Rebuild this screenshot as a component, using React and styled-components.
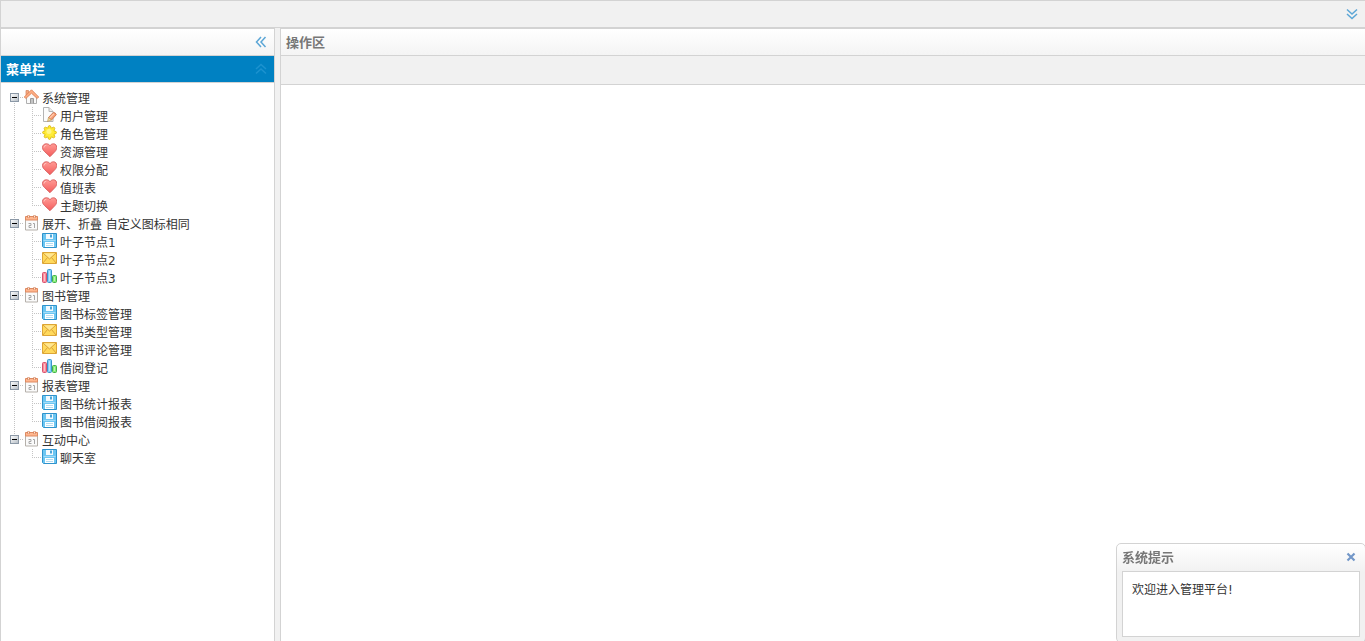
import React, { useState } from 'react';
import styled, { createGlobalStyle, css, ThemeProvider } from 'styled-components';

const theme = {
  border: '#d3d3d3',
  panel: '#f1f1f1',
  accent: '#0081c2',
  title: '#777777',
  text: '#333333',
  tool: '#5ba6d6',
  font: '"DejaVu Sans", "Noto Sans CJK SC", sans-serif',
};

const GlobalStyle = createGlobalStyle`
  * {
    box-sizing: border-box;
  }

  body {
    margin: 0;
    overflow: hidden;
    background: #ffffff;
  }
`;

const Page = styled.div`
  display: flex;
  flex-direction: column;
  height: 100vh;
  font-family: ${(props) => props.theme.font};
  font-size: 12px;
  color: ${(props) => props.theme.text};
  background: ${(props) => props.theme.panel};
`;

const TopBar = styled.header`
  display: flex;
  align-items: center;
  justify-content: flex-end;
  height: 28px;
  padding: 0 5px;
  border: 1px solid ${(props) => props.theme.border};
  border-right: 0;
`;

const Main = styled.div`
  display: flex;
  flex: 1;
  gap: 5px;
  min-height: 0;
`;

// Side panel that holds the menu tree
const Sidebar = styled.aside`
  display: flex;
  flex-direction: column;
  flex: 0 0 275px;
  background: #ffffff;
  border: 1px solid ${(props) => props.theme.border};
  border-bottom: 0;
`;

const Content = styled.main`
  display: flex;
  flex-direction: column;
  flex: 1;
  background: #ffffff;
  border: 1px solid ${(props) => props.theme.border};
  border-width: 1px 0 0 1px;
`;

const PanelHeader = styled.div`
  display: flex;
  align-items: center;
  justify-content: space-between;
  height: 27px;
  padding: 0 5px;
  border-bottom: 1px solid ${(props) => props.theme.border};
  background: linear-gradient(to bottom, #ffffff, #f4f4f4);
  color: ${(props) => props.theme.title};

  ${(props) =>
    props.$active &&
    css`
      background: ${props.theme.accent};
      color: #ffffff;
    `}
`;

const PanelTitle = styled.h2`
  margin: 0;
  padding-top: 2px;
  font-size: 13px;
  line-height: 16px;
  font-weight: bold;
`;

const ToolButton = styled.button`
  display: flex;
  width: 16px;
  height: 16px;
  padding: 0;
  border: 0;
  background: none;
  color: ${(props) => (props.$dim ? '#1c92cf' : props.theme.tool)};
  cursor: pointer;
`;

const TabStrip = styled.div`
  height: 29px;
  border-bottom: 1px solid ${(props) => props.theme.border};
  background: ${(props) => props.theme.panel};
`;

const Tree = styled.ul`
  flex: 1;
  margin: 0;
  padding: 6px 4px;
  overflow: hidden;
  list-style: none;
`;

const Branch = styled.ul`
  margin: 0;
  padding: 0;
  list-style: none;
`;

const Row = styled.div`
  display: flex;
  align-items: center;
  height: 18px;
`;

const dotsDown = 'repeating-linear-gradient(to bottom, #c4c4c4 0 1px, transparent 1px 2px)';
const dotsRight = 'repeating-linear-gradient(to right, #c4c4c4 0 1px, transparent 1px 2px)';

// Dotted guides of one tree level
const lines = {
  first: `${dotsDown} 9px 8px / 1px 10px no-repeat, ${dotsRight} 9px 8px / 9px 1px no-repeat`,
  middle: `${dotsDown} 9px 0 / 1px 18px no-repeat, ${dotsRight} 9px 8px / 9px 1px no-repeat`,
  last: `${dotsDown} 9px 0 / 1px 8px no-repeat, ${dotsRight} 9px 8px / 9px 1px no-repeat`,
  through: `${dotsDown} 9px 0 / 1px 18px no-repeat`,
  none: 'none',
};

const Guide = styled.span`
  flex: 0 0 18px;
  height: 18px;
  background: ${(props) => lines[props.$line]};
`;

const Toggle = styled.button`
  display: flex;
  align-items: flex-start;
  justify-content: center;
  flex: 0 0 18px;
  height: 18px;
  padding: 4px 0 0;
  border: 0;
  background: ${(props) => lines[props.$line]};
  cursor: pointer;
`;

const NodeLink = styled.a`
  display: flex;
  align-items: flex-start;
  gap: 3px;
  height: 18px;
  color: ${(props) => props.theme.text};
  line-height: 20px;
  white-space: nowrap;
  text-decoration: none;

  svg {
    flex: none;
  }

  &:hover {
    text-decoration: underline;
  }
`;

// Message window in the lower right corner
const Message = styled.section`
  position: fixed;
  right: -1px;
  bottom: -2px;
  display: flex;
  flex-direction: column;
  width: 250px;
  height: 100px;
  padding: 5px;
  border: 1px solid ${(props) => props.theme.border};
  border-radius: 5px;
  background: linear-gradient(to bottom, #ffffff, ${(props) => props.theme.panel} 28px);
`;

const MessageHeader = styled.div`
  display: flex;
  align-items: center;
  justify-content: space-between;
  height: 16px;
  margin-bottom: 6px;
  color: ${(props) => props.theme.title};
`;

const MessageBody = styled.p`
  flex: 1;
  margin: 0;
  padding: 10px 9px;
  border: 1px solid ${(props) => props.theme.border};
  background: #ffffff;
  line-height: 16px;
`;

const Chevrons = ({ turn = 0 }) => (
  <svg width="16" height="16" viewBox="0 0 16 16" fill="none" stroke="currentColor" strokeWidth="1.5">
    <g transform={`rotate(${turn} 8 8)`}>
      <path d="M3 3.5 8 8l5-4.5M3 8l5 4.5L13 8" />
    </g>
  </svg>
);

const Minus = ({ open }) => (
  <svg width="9" height="9" viewBox="0 0 9 9" shapeRendering="crispEdges">
    <defs>
      <linearGradient id="toggleFill" x1="0" y1="0" x2="1" y2="1">
        <stop offset="0" stopColor="#ffffff" />
        <stop offset="1" stopColor="#b4bcc4" />
      </linearGradient>
    </defs>
    <rect x=".5" y=".5" width="8" height="8" fill="url(#toggleFill)" stroke="#8b98a6" />
    <path d={open ? 'M2 4.5h5' : 'M2 4.5h5M4.5 2v5'} stroke="#000000" />
  </svg>
);

const Home = () => (
  <>
    <path d="M3.500 8v6.500h10V8l-5-4.500z" fill="#fafafa" stroke="#b0b0b0" />
    <path d="M7.500 14.500V9.500h3v5" fill="#c4c4c4" stroke="#999999" />
    <path d="M3 1.500h2.500v3L3 6.500z" fill="#f5a77e" stroke="#d98a66" strokeWidth=".8" />
    <path d="m1.300 8 7.200-7.200L15.700 8l-1.500 1.500-5.700-5.300-5.700 5.300z" fill="#ffae84" stroke="#dc8258" strokeWidth=".9" strokeLinejoin="round" />
  </>
);

const Edit = () => (
  <>
    <path d="M2.500.5h5.500l4 4v10H2.500z" fill="#fcfcfc" stroke="#b4b4b4" />
    <path d="M8 .500v4h4" fill="#eeeeee" stroke="#b4b4b4" />
    <path d="m7.500 10.500 4.500-4.800q2.500-.7 3.300 2L10.500 13z" fill="#f79b72" stroke="#c8714c" strokeWidth=".8" />
    <path d="m8.800 11 4.200-4.300" stroke="#ffc9ac" strokeWidth="1.300" />
    <path d="m7.500 10.500 3 2.500-4 1.500z" fill="#f5dc9c" stroke="#b58d4c" strokeWidth=".6" />
  </>
);

// Eight round petals on a disc
const Star = () => (
  <>
    <g fill="#ffe92c" stroke="#dcbb1c" strokeWidth=".9">
      {[0, 45, 90, 135, 180, 225, 270, 315].map((turn) => (
        <path key={turn} transform={`rotate(${turn} 8.500 7.500)`} d="M6.300 4.300 7.600.9q.9-.8 1.800 0l1.300 3.400z" />
      ))}
    </g>
    <circle cx="8.500" cy="7.500" r="4.600" fill="#ffec3a" />
    <circle cx="8" cy="6.500" r="2.500" fill="#fff584" />
  </>
);

const Heart = () => (
  <>
    <defs>
      <linearGradient id="heartFill" x1="0" y1="0" x2="0" y2="1">
        <stop offset="0" stopColor="#ff9a94" />
        <stop offset="1" stopColor="#f45c5c" />
      </linearGradient>
    </defs>
    <path
      d="M9 13.700 3.300 8.300C1.900 7 1.500 5.700 1.500 4.500 1.500 2.200 3.200.8 5.300.8 7 .8 8.300 1.500 9 2.700 9.700 1.500 11 .8 12.500.8c2 0 3.200 1.500 3.200 3.700 0 1.200-.4 2.600-1.500 3.800z"
      fill="url(#heartFill)"
      stroke="#d65a5a"
      strokeWidth=".9"
    />
    <path d="M3 4.500Q3 2.500 5.300 2.200" fill="none" stroke="#ffc4be" />
  </>
);

const Calendar = () => (
  <>
    <path d="M2.500 4.500h12v10.500h-12z" fill="#fafafa" stroke="#b5b0aa" />
    <path d="M2.500 1.500h12v3.500h-12z" fill="#ffb68e" stroke="#dd8a62" />
    <path d="M5.500 0v3M11.500 0v3" stroke="#cf7c55" strokeWidth="2" />
    <path d="M5.500 .5v2M11.500 .5v2" stroke="#ffe6d6" />
    <path d="M5.500 8.500h2.500v2h-2v2h2.500M10 8.500h1.500V13" fill="none" stroke="#a6a6a6" />
  </>
);

const Disk = () => (
  <>
    <path d="M1.500.5h14v14h-13l-1-1z" fill="#6cc6f2" stroke="#2f93cc" />
    <path d="M5 1h7v5H5z" fill="#f4fafe" />
    <path d="M9 1.500h2v3H9z" fill="#4aa6da" />
    <path d="M2.500 7.500h12" stroke="#a4dcf8" />
    <path d="M4 9h9v5H4z" fill="#ffffff" />
    <path d="M5 10.500h7M5 12.500h7" stroke="#b4dcf0" />
  </>
);

const Mail = () => (
  <>
    <path d="M1.500 1.500h14v11h-14z" fill="#ffd95c" stroke="#dda535" />
    <path d="M2.500 2.500h12l-6 5z" fill="#ffe792" />
    <path d="m2 2 6.500 6L15 2M2 12l4.500-5.500M15 12l-4.500-5.500" fill="none" stroke="#dba338" />
  </>
);

const Chart = () => (
  <>
    <rect x="1.500" y="3.500" width="4" height="10" rx="1" fill="#fa8f9c" stroke="#d65370" />
    <rect x="6.500" y=".5" width="4" height="13" rx="1" fill="#80cef8" stroke="#3a95cc" />
    <rect x="11.500" y="6.500" width="4" height="7" rx="1" fill="#86ec7a" stroke="#43b04a" />
    <path d="M3.500 5v7M8.500 2v10M13.500 8v4" stroke="#ffffff" strokeOpacity=".45" />
  </>
);

const icons = { home: Home, edit: Edit, star: Star, heart: Heart, calendar: Calendar, disk: Disk, mail: Mail, chart: Chart };

const NodeIcon = ({ name }) => {
  const Art = icons[name];
  return (
    <svg width="16" height="16" viewBox="0 0 16 16" aria-hidden="true">
      <Art />
    </svg>
  );
};

const menu = [
  {
    name: '系统管理',
    icon: 'home',
    children: [
      { name: '用户管理', icon: 'edit' },
      { name: '角色管理', icon: 'star' },
      { name: '资源管理', icon: 'heart' },
      { name: '权限分配', icon: 'heart' },
      { name: '值班表', icon: 'heart' },
      { name: '主题切换', icon: 'heart' },
    ],
  },
  {
    name: '展开、折叠 自定义图标相同',
    icon: 'calendar',
    children: [
      { name: '叶子节点1', icon: 'disk' },
      { name: '叶子节点2', icon: 'mail' },
      { name: '叶子节点3', icon: 'chart' },
    ],
  },
  {
    name: '图书管理',
    icon: 'calendar',
    children: [
      { name: '图书标签管理', icon: 'disk' },
      { name: '图书类型管理', icon: 'mail' },
      { name: '图书评论管理', icon: 'mail' },
      { name: '借阅登记', icon: 'chart' },
    ],
  },
  {
    name: '报表管理',
    icon: 'calendar',
    children: [
      { name: '图书统计报表', icon: 'disk' },
      { name: '图书借阅报表', icon: 'disk' },
    ],
  },
  {
    name: '互动中心',
    icon: 'calendar',
    children: [{ name: '聊天室', icon: 'disk' }],
  },
];

const MenuNode = ({ node, first, last }) => {
  const [open, setOpen] = useState(true);
  const line = first ? 'first' : last ? 'last' : 'middle';

  return (
    <li>
      <Row>
        <Toggle type="button" $line={line} aria-expanded={open} aria-label={node.name} onClick={() => setOpen(!open)}>
          <Minus open={open} />
        </Toggle>
        <NodeLink href="#">
          <NodeIcon name={node.icon} />
          {node.name}
        </NodeLink>
      </Row>
      {open && (
        <Branch>
          {node.children.map((child, i) => (
            <li key={child.name}>
              <Row>
                <Guide $line={last ? 'none' : 'through'} />
                <Guide $line={i === node.children.length - 1 ? 'last' : 'middle'} />
                <NodeLink href="#">
                  <NodeIcon name={child.icon} />
                  {child.name}
                </NodeLink>
              </Row>
            </li>
          ))}
        </Branch>
      )}
    </li>
  );
};

const App = () => {
  const [message, setMessage] = useState(true);

  return (
    <ThemeProvider theme={theme}>
      <GlobalStyle />
      <Page>
        <TopBar>
          <ToolButton type="button" aria-label="展开">
            <Chevrons />
          </ToolButton>
        </TopBar>

        <Main>
          <Sidebar>
            <PanelHeader>
              <span />
              <ToolButton type="button" aria-label="折叠">
                <Chevrons turn={90} />
              </ToolButton>
            </PanelHeader>
            <PanelHeader $active>
              <PanelTitle>菜单栏</PanelTitle>
              <ToolButton type="button" $dim aria-label="收起">
                <Chevrons turn={180} />
              </ToolButton>
            </PanelHeader>
            <Tree>
              {menu.map((node, i) => (
                <MenuNode key={node.name} node={node} first={i === 0} last={i === menu.length - 1} />
              ))}
            </Tree>
          </Sidebar>

          <Content>
            <PanelHeader>
              <PanelTitle>操作区</PanelTitle>
            </PanelHeader>
            <TabStrip />
          </Content>
        </Main>

        {message && (
          <Message>
            <MessageHeader>
              <PanelTitle>系统提示</PanelTitle>
              <ToolButton type="button" aria-label="关闭" onClick={() => setMessage(false)}>
                <svg width="16" height="16" viewBox="0 0 16 16">
                  <path d="m3.500 4.500 7 7m0-7-7 7" stroke="#7397c8" strokeWidth="2.200" />
                </svg>
              </ToolButton>
            </MessageHeader>
            <MessageBody>欢迎进入管理平台!</MessageBody>
          </Message>
        )}
      </Page>
    </ThemeProvider>
  );
};

export default App;
